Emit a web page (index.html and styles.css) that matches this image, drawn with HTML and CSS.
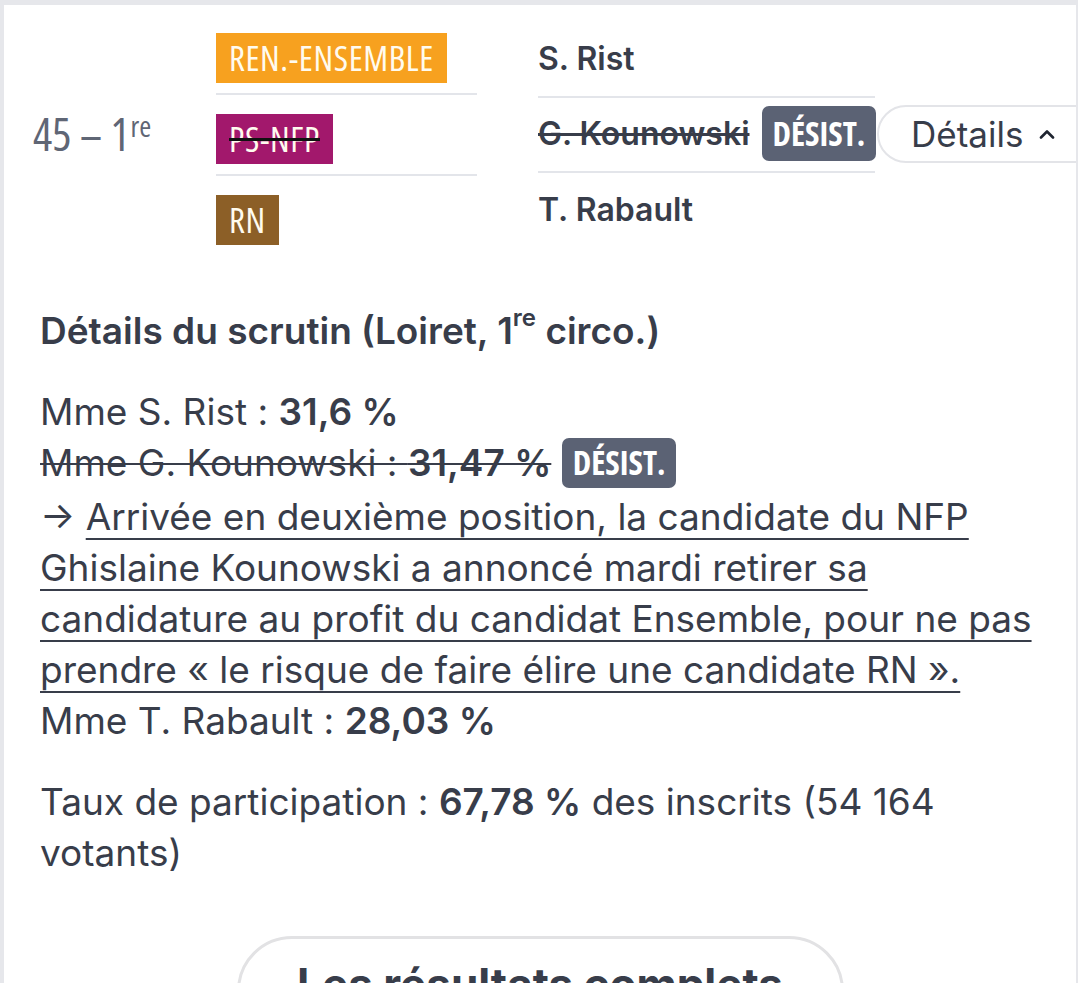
FILE: index.html
```html
<!DOCTYPE html>
<html lang="fr">
<head>
<meta charset="utf-8">
<title>Loiret 1re circonscription</title>
<link rel="stylesheet" href="styles.css">
</head>
<body>
<div class="card">
  <div class="summary">
    <div class="circo">45 – 1<sup>re</sup></div>
    <div class="parties">
      <div class="prow"><span class="party ens">REN.-ENSEMBLE</span></div>
      <div class="prow"><span class="party nfp"><s>PS-NFP</s></span></div>
      <div class="prow last"><span class="party rn">RN</span></div>
    </div>
    <div class="names">
      <div class="nrow">S. Rist</div>
      <div class="nrow"><s>G. Kounowski</s><span class="desist">DÉSIST.</span></div>
      <div class="nrow last">T. Rabault</div>
    </div>
    <button class="details-btn">Détails <svg class="chev" viewBox="0 0 16 10" width="16" height="10"><path d="M2 8.5 L8 2.5 L14 8.5" fill="none" stroke="#1f2430" stroke-width="2.6" stroke-linecap="round" stroke-linejoin="round"/></svg></button>
  </div>

  <div class="detail">
    <h2 class="title">Détails du scrutin (Loiret, 1<sup>re</sup> circo.)</h2>
    <p class="results">
      Mme S. Rist : <b>31,6 %</b><br>
      <s>Mme G. Kounowski : <b>31,47 %</b></s> <span class="desist inline">DÉSIST.</span><br>
      → <a class="link">Arrivée en deuxième position, la candidate du NFP Ghislaine Kounowski a annoncé mardi retirer sa candidature au profit du candidat Ensemble, pour ne pas prendre « le risque de faire élire une candidate RN ».</a><br>
      Mme T. Rabault : <b>28,03 %</b>
    </p>
    <p class="turnout">Taux de participation : <b>67,78 %</b> des inscrits (54 164 votants)</p>
  </div>
  <div class="more-wrap"><button class="more">Les résultats complets</button></div>
</div>
</body>
</html>
```
FILE: styles.css
```css
* { box-sizing: border-box; }
html, body { margin: 0; padding: 0; background: #ffffff; }
body {
  width: 1080px;
  height: 983px;
  overflow: hidden;
  font-family: "Inter", "Noto Sans", sans-serif;
  color: #383d4a;
}
.card {
  width: 1078px;
  border-top: 5px solid #e6e7eb;
  border-left: 4px solid #e6e7eb;
  border-right: 2px solid #e6e7eb;
  height: 983px;
  overflow: hidden;
  background: #fff;
}
.summary {
  display: flex;
  align-items: flex-start;
}
.summary > * { flex: none; }
.circo {
  width: 212px;
  padding-left: 29px;
  padding-top: 104px;
  font-family: "Open Sans", sans-serif;
  font-stretch: 75%;
  font-size: 45px;
  line-height: 50px;
  color: #5f6675;
}
.circo sup {
  font-size: 29px;
  vertical-align: top;
  position: relative;
  top: -8px;
  margin-left: 1px;
}
.parties {
  width: 261px;
  padding-top: 9px;
}
.prow {
  padding: 19px 0 10px;
  border-bottom: 2px solid #e3e5ea;
  height: 81px;
}
.prow.last { border-bottom: none; }
.party {
  display: inline-block;
  height: 50px;
  line-height: 50px;
  padding: 0 13px;
  font-family: "Open Sans", sans-serif;
  font-stretch: 75%;
  font-size: 35px;
  letter-spacing: 0.6px;
  color: #fffbef;
}
.party s { text-decoration-color: #111; text-decoration-thickness: 3px; }
.ens { background: #f7a11f; }
.nfp { background: #a2186c; }
.rn { background: #8c5f27; }
.names {
  width: 337px;
  margin-left: 61px;
  padding-top: 18px;
}
.nrow {
  display: flex;
  align-items: center;
  gap: 12px;
  padding: 8px 0 10px;
  height: 75px;
  line-height: 55px;
  border-bottom: 2px solid #e3e5ea;
  font-size: 32px;
  font-weight: 600;
  color: #383d4a;
  white-space: nowrap;
}
.nrow.last { border-bottom: none; }
.nrow s { text-decoration-thickness: 3px; }
.desist {
  display: inline-block;
  background: #5b6274;
  color: #fff;
  border-radius: 7px;
  height: 55px;
  line-height: 55px;
  padding: 0 11px;
  font-family: "Open Sans", sans-serif;
  font-stretch: 75%;
  font-weight: 700;
  font-size: 33px;
}
.details-btn {
  margin-top: 100px;
  margin-left: 2px;
  width: 230px;
  height: 58px;
  border: 2px solid #e3e4e8;
  border-radius: 29px;
  background: #fff;
  padding: 0 0 0 32px;
  text-align: left;
  font-family: "Inter", "Noto Sans", sans-serif;
  font-size: 35px;
  color: #383d4a;
  display: flex;
  align-items: center;
  gap: 16px;
}
.detail {
  padding: 49px 20px 0 36px;
}
.title {
  margin: 0;
  font-size: 37px;
  line-height: 50px;
  font-weight: 600;
  color: #383d4a;
}
.title sup {
  font-size: 24px;
  vertical-align: top;
  position: relative;
  top: 0;
  line-height: 1;
}
.results {
  margin: 30px 0 0;
  font-size: 37px;
  line-height: 51px;
}
.results b, .turnout b { font-weight: 600; }
.results s { text-decoration-thickness: 2px; }
.desist.inline {
  height: 50px;
  line-height: 50px;
  vertical-align: middle;
  position: relative;
  top: -3px;
}
.link {
  color: #383d4a;
  text-decoration: underline;
  text-decoration-thickness: 2px;
  text-underline-offset: 8px;
}
.turnout {
  margin: 30px 0 0;
  font-size: 37px;
  line-height: 51px;
}
.more-wrap {
  display: flex;
  justify-content: center;
  padding-top: 58px;
}
.more {
  width: 607px;
  height: 110px;
  border: 3px solid #e2e2e4;
  border-radius: 55px;
  background: #fff;
  font-family: "Inter", "Noto Sans", sans-serif;
  font-weight: 700;
  font-size: 44px;
  color: #383d4a;
  text-align: center;
  line-height: 1;
  padding: 16px 0 30px;
  align-self: flex-start;
}
```
